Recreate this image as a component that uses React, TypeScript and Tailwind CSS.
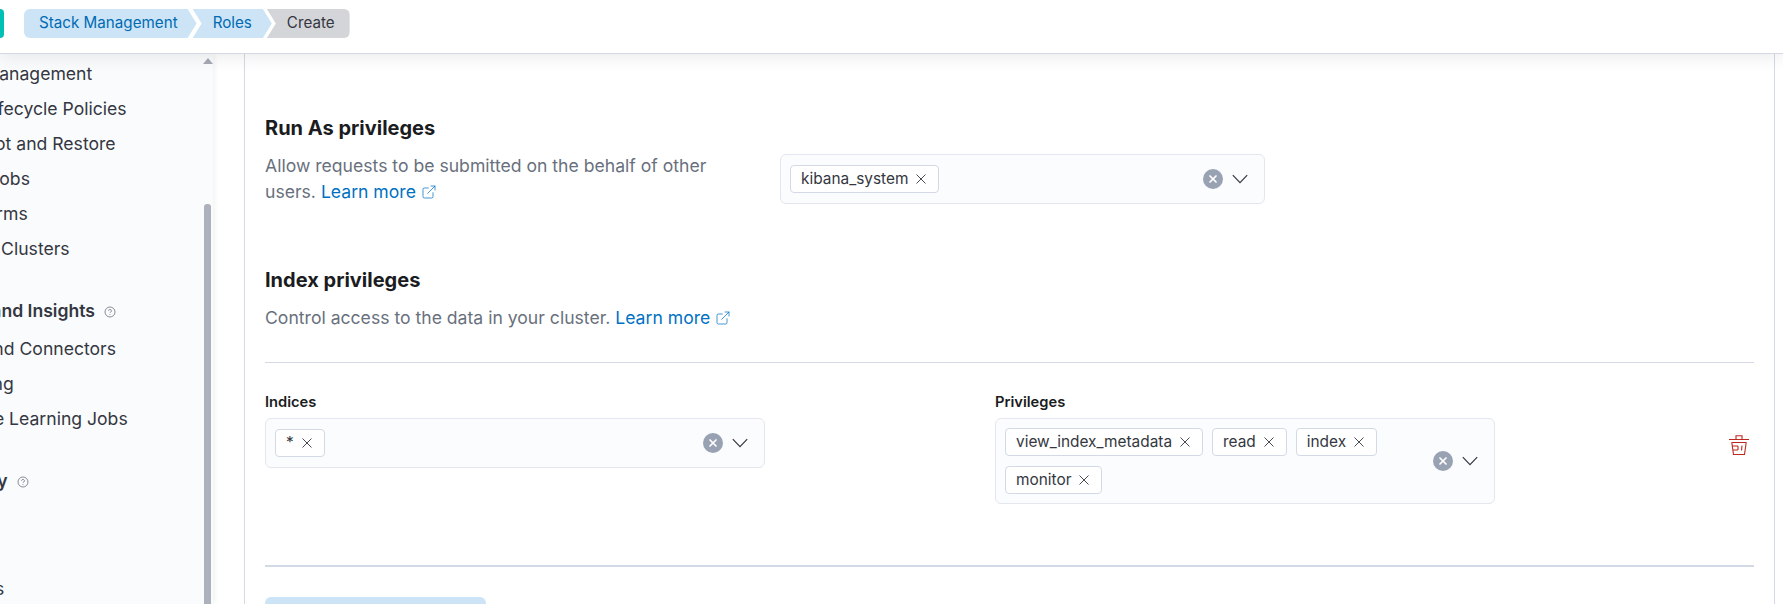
import React from 'react';
import { ExternalLink, X } from 'lucide-react';

const Trash = () => (
  <svg width="20" height="20" viewBox="0 0 20 20" fill="none" stroke="#bd271e" strokeWidth="1.1">
    <path d="M0 4.5h20M7 4.5V.8h6v3.7M2.5 7.5h15M2.8 7.5l1.7 12h11l1.7-12M3.5 11H9M4 15h5M9 11v4M13 10.5l-.5 5" />
  </svg>
);

const ClearAndToggle = () => (
  <div className="flex items-center gap-[9px] shrink-0">
    <span className="w-5 h-5 rounded-full bg-[#98a2b3] flex items-center justify-center">
      <X size={12} strokeWidth={3.5} className="text-white" />
    </span>
    <svg width="16" height="10" viewBox="0 0 16 10" fill="none" stroke="#343741" strokeWidth="1.2">
      <path d="M.8 1.2 8 8.6l7.2-7.4" />
    </svg>
  </div>
);

const Pill = ({ label }: { label: string }) => (
  <span className="h-[28px] pl-[10px] pr-[12px] flex items-center gap-[8px] bg-white border border-[#d3dae6] rounded-[4px] text-[15.4px] text-[#343741]">
    {label}
    <svg width="10" height="10" viewBox="0 0 10 10" fill="none" stroke="#343741" strokeWidth="0.9">
      <path d="M.5.5l9 9M9.5.5l-9 9" />
    </svg>
  </span>
);

const Combo = ({ pills, className }: { pills: string[]; className: string }) => (
  <div className={`flex items-center justify-between bg-[#fbfcfd] border border-[#e3e6ef] rounded-[6px] pl-[9px] pr-[16px] py-[9px] ${className}`}>
    <div className="flex flex-wrap gap-x-[9px] gap-y-[10px]">
      {pills.map((p) => <Pill key={p} label={p} />)}
    </div>
    <ClearAndToggle />
  </div>
);

const Learn = () => (
  <a className="text-[#0071c2] inline-flex items-center gap-[5px]">
    Learn more <ExternalLink size={16} strokeWidth={1.1} />
  </a>
);

const Crumb = ({ label, className }: { label: string; className: string }) => (
  <div className={`h-[29px] flex items-center text-[15.2px] ${className}`}>
    {label}
  </div>
);

const Help = () => (
  <svg width="12" height="12" viewBox="0 0 12 12" fill="none" stroke="#69707d" strokeWidth="0.8" className="inline-block ml-[9px] align-[-1px]">
    <circle cx="6" cy="6" r="5" />
    <path d="M4.6 4.8a1.4 1.4 0 1 1 2.1 1.2c-.5.3-.7.5-.7 1M6 8.2v.8" />
  </svg>
);

// sidebar is scrolled sideways in the shot, so the labels get clipped on the left
const items: { label: string; head?: boolean }[] = [
  { label: 'Index Management' },
  { label: 'Index Lifecycle Policies' },
  { label: 'Snapshot and Restore' },
  { label: 'Rollup Jobs' },
  { label: 'Transforms' },
  { label: 'Remote Clusters' },
  { label: 'Alerts and Insights', head: true },
  { label: 'Rules and Connectors' },
  { label: 'Reporting' },
  { label: 'Machine Learning Jobs' },
  { label: 'Security', head: true },
  { label: 'Users' },
  { label: 'Roles' },
  { label: 'API keys' },
];

export default function App() {
  return (
    <div className="w-[1783px] h-[604px] overflow-hidden bg-white font-['Inter',sans-serif] flex flex-col">
      <header className="h-[54px] shrink-0 border-b border-[#d3dae6] shadow-[0_4px_16px_rgba(0,0,0,0.08)] relative z-10 bg-white flex items-start pt-[9px]">
        <div className="w-[4px] h-[29px] bg-[#00bfb3] rounded-r-[4px]" />
        <div className="flex ml-[20px]">
          <Crumb label="Stack Management" className="bg-[#cce4f5] text-[#006bb4] pl-[15px] pr-[19px] rounded-l-[6px] [clip-path:polygon(0_0,calc(100%-9px)_0,100%_50%,calc(100%-9px)_100%,0_100%)]" />
          <Crumb label="Roles" className="bg-[#cce4f5] text-[#006bb4] pl-[20px] pr-[20px] -ml-[4px] [clip-path:polygon(0_0,calc(100%-9px)_0,100%_50%,calc(100%-9px)_100%,0_100%,9px_50%)]" />
          <Crumb label="Create" className="bg-[#d3d5d9] text-[#343741] pl-[20px] pr-[15px] -ml-[5px] rounded-r-[6px] [clip-path:polygon(0_0,100%_0,100%_100%,0_100%,9px_50%)]" />
        </div>
      </header>
      <div className="flex flex-1 min-h-0">
        <aside className="w-[213px] shrink-0 bg-[#fafbfd] shadow-[2px_0_4px_rgba(0,0,0,0.05)] flex relative overflow-hidden">
          <div className="flex-1 min-w-0 overflow-hidden text-[17.6px] text-[#343741]">
            <div className="-ml-[67px] pt-[2px]">
              {items.map((it) => (
                <div key={it.label} className={`h-[35px] leading-[35px] whitespace-nowrap ${it.head ? 'mt-[27px] mb-[3px] ml-[3px] font-semibold' : ''}`}>
                  {it.label}
                  {it.head && <Help />}
                </div>
              ))}
            </div>
          </div>
          <div className="w-[7px] mr-[2px] flex flex-col items-center shrink-0">
            <span className="mt-[4px] border-x-[5px] border-x-transparent border-b-[6px] border-b-[#a5aab3]" />
            <div className="mt-[140px] w-[7px] flex-1 bg-[#adb1bb] rounded-t-[3px]" />
          </div>
        </aside>
        <main className="flex-1 flex pl-[31px] pr-[8px] bg-white">
          <section className="flex-1 border-x border-[#d3dae6] px-[20px] pt-[62px]">
            <h2 className="text-[20px] leading-[24px] font-bold text-[#1a1c21]">Run As privileges</h2>
            <div className="flex mt-[13px] items-start">
              <p className="w-[460px] text-[17.6px] leading-[26px] text-[#69707d]">
                Allow requests to be submitted on the behalf of other users. <Learn />
              </p>
              <Combo pills={['kibana_system']} className="mt-[1px] ml-[55px] w-[485px] h-[50px]" />
            </div>
            <h2 className="mt-[63px] text-[20px] leading-[24px] font-bold text-[#1a1c21]">Index privileges</h2>
            <p className="mt-[13px] text-[17.6px] leading-[26px] text-[#69707d]">
              Control access to the data in your cluster. <Learn />
            </p>
            <div className="mt-[31px] border-t border-[#d3dae6]" />
            <div className="flex mt-[30px] items-start">
              <div className="w-[500px]">
                <div className="text-[14.7px] leading-[18px] font-semibold text-[#1a1c21]">Indices</div>
                <Combo pills={['*']} className="mt-[7px] h-[50px]" />
              </div>
              <div className="w-[500px] ml-[230px]">
                <div className="text-[14.7px] leading-[18px] font-semibold text-[#1a1c21]">Privileges</div>
                <Combo pills={['view_index_metadata', 'read', 'index', 'monitor']} className="mt-[7px]" />
              </div>
              <div className="ml-auto mr-[5px] mt-[42px]"><Trash /></div>
            </div>
            <div className="mt-[61px] h-[2px] bg-[#d3dae6]" />
            <div className="mt-[30px] w-[221px] h-[40px] rounded-[6px] bg-[#cce4f5]" />
          </section>
        </main>
      </div>
    </div>
  );
}
